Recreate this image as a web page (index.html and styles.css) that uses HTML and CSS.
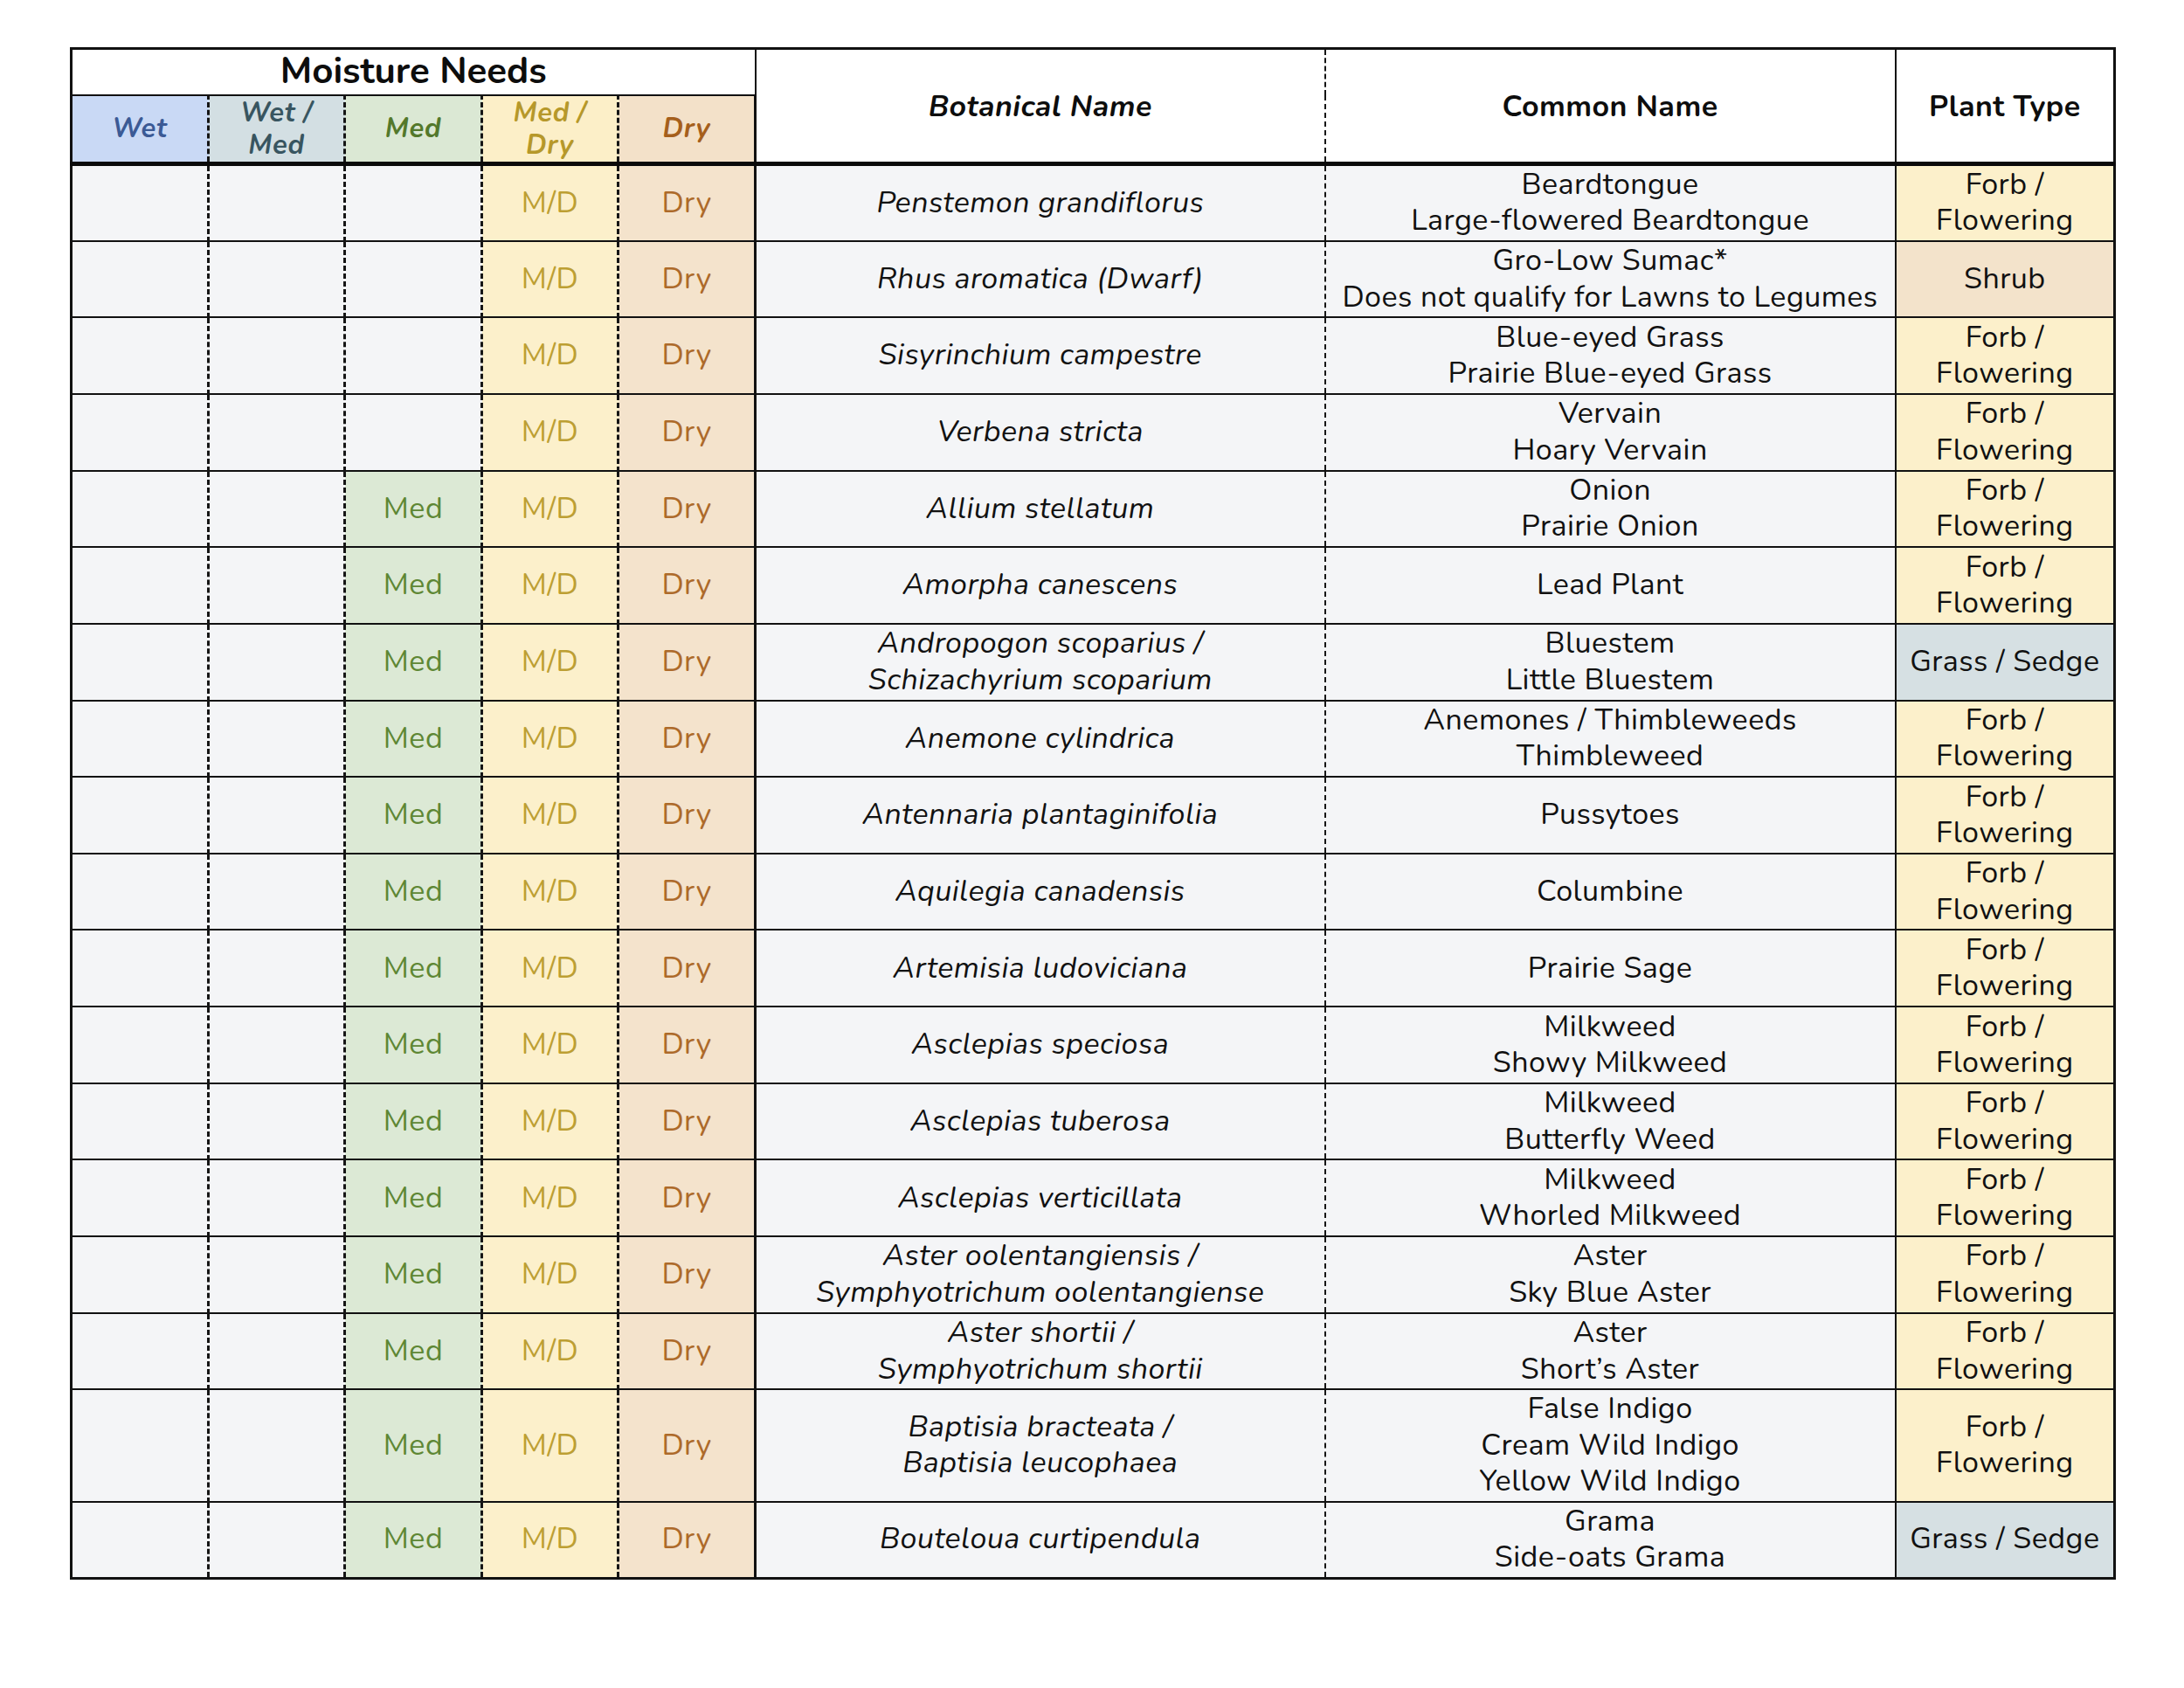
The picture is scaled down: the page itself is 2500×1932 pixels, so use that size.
FILE: index.html
```html
<!DOCTYPE html>
<html lang="en">
<head>
<meta charset="utf-8">
<title>Plant List – Moisture Needs</title>
<link rel="stylesheet" href="styles.css">
</head>
<body>
<main class="page">
<table class="plants">
  <colgroup>
    <col class="c-m"><col class="c-m2"><col class="c-m"><col class="c-m2"><col class="c-m">
    <col class="c-bot"><col class="c-com"><col class="c-type">
  </colgroup>
  <thead>
    <tr class="h1">
      <th colspan="5" class="mn">Moisture Needs</th>
      <th rowspan="2" class="hb bot-h">Botanical Name</th>
      <th rowspan="2" class="hb com-h">Common Name</th>
      <th rowspan="2" class="hb type-h">Plant Type</th>
    </tr>
    <tr class="h2">
      <th class="sh wet">Wet</th>
      <th class="sh wetmed">Wet /<br>Med</th>
      <th class="sh med">Med</th>
      <th class="sh meddry">Med /<br>Dry</th>
      <th class="sh dry last-m">Dry</th>
    </tr>
  </thead>
  <tbody>
    <tr><td class="m"></td><td class="m"></td><td class="m"></td><td class="m md">M/D</td><td class="m dr">Dry</td><td class="bot">Penstemon grandiflorus</td><td class="com">Beardtongue<br>Large-flowered Beardtongue</td><td class="type forb">Forb /<br>Flowering</td></tr>
    <tr><td class="m"></td><td class="m"></td><td class="m"></td><td class="m md">M/D</td><td class="m dr">Dry</td><td class="bot">Rhus aromatica (Dwarf)</td><td class="com">Gro-Low Sumac*<br>Does not qualify for Lawns to Legumes</td><td class="type shrub">Shrub</td></tr>
    <tr><td class="m"></td><td class="m"></td><td class="m"></td><td class="m md">M/D</td><td class="m dr">Dry</td><td class="bot">Sisyrinchium campestre</td><td class="com">Blue-eyed Grass<br>Prairie Blue-eyed Grass</td><td class="type forb">Forb /<br>Flowering</td></tr>
    <tr><td class="m"></td><td class="m"></td><td class="m"></td><td class="m md">M/D</td><td class="m dr">Dry</td><td class="bot">Verbena stricta</td><td class="com">Vervain<br>Hoary Vervain</td><td class="type forb">Forb /<br>Flowering</td></tr>
    <tr><td class="m"></td><td class="m"></td><td class="m me">Med</td><td class="m md">M/D</td><td class="m dr">Dry</td><td class="bot">Allium stellatum</td><td class="com">Onion<br>Prairie Onion</td><td class="type forb">Forb /<br>Flowering</td></tr>
    <tr><td class="m"></td><td class="m"></td><td class="m me">Med</td><td class="m md">M/D</td><td class="m dr">Dry</td><td class="bot">Amorpha canescens</td><td class="com">Lead Plant</td><td class="type forb">Forb /<br>Flowering</td></tr>
    <tr><td class="m"></td><td class="m"></td><td class="m me">Med</td><td class="m md">M/D</td><td class="m dr">Dry</td><td class="bot">Andropogon scoparius /<br>Schizachyrium scoparium</td><td class="com">Bluestem<br>Little Bluestem</td><td class="type grass">Grass / Sedge</td></tr>
    <tr><td class="m"></td><td class="m"></td><td class="m me">Med</td><td class="m md">M/D</td><td class="m dr">Dry</td><td class="bot">Anemone cylindrica</td><td class="com">Anemones / Thimbleweeds<br>Thimbleweed</td><td class="type forb">Forb /<br>Flowering</td></tr>
    <tr><td class="m"></td><td class="m"></td><td class="m me">Med</td><td class="m md">M/D</td><td class="m dr">Dry</td><td class="bot">Antennaria plantaginifolia</td><td class="com">Pussytoes</td><td class="type forb">Forb /<br>Flowering</td></tr>
    <tr><td class="m"></td><td class="m"></td><td class="m me">Med</td><td class="m md">M/D</td><td class="m dr">Dry</td><td class="bot">Aquilegia canadensis</td><td class="com">Columbine</td><td class="type forb">Forb /<br>Flowering</td></tr>
    <tr><td class="m"></td><td class="m"></td><td class="m me">Med</td><td class="m md">M/D</td><td class="m dr">Dry</td><td class="bot">Artemisia ludoviciana</td><td class="com">Prairie Sage</td><td class="type forb">Forb /<br>Flowering</td></tr>
    <tr><td class="m"></td><td class="m"></td><td class="m me">Med</td><td class="m md">M/D</td><td class="m dr">Dry</td><td class="bot">Asclepias speciosa</td><td class="com">Milkweed<br>Showy Milkweed</td><td class="type forb">Forb /<br>Flowering</td></tr>
    <tr><td class="m"></td><td class="m"></td><td class="m me">Med</td><td class="m md">M/D</td><td class="m dr">Dry</td><td class="bot">Asclepias tuberosa</td><td class="com">Milkweed<br>Butterfly Weed</td><td class="type forb">Forb /<br>Flowering</td></tr>
    <tr><td class="m"></td><td class="m"></td><td class="m me">Med</td><td class="m md">M/D</td><td class="m dr">Dry</td><td class="bot">Asclepias verticillata</td><td class="com">Milkweed<br>Whorled Milkweed</td><td class="type forb">Forb /<br>Flowering</td></tr>
    <tr><td class="m"></td><td class="m"></td><td class="m me">Med</td><td class="m md">M/D</td><td class="m dr">Dry</td><td class="bot">Aster oolentangiensis /<br>Symphyotrichum oolentangiense</td><td class="com">Aster<br>Sky Blue Aster</td><td class="type forb">Forb /<br>Flowering</td></tr>
    <tr><td class="m"></td><td class="m"></td><td class="m me">Med</td><td class="m md">M/D</td><td class="m dr">Dry</td><td class="bot">Aster shortii /<br>Symphyotrichum shortii</td><td class="com">Aster<br>Short’s Aster</td><td class="type forb">Forb /<br>Flowering</td></tr>
    <tr><td class="m"></td><td class="m"></td><td class="m me">Med</td><td class="m md">M/D</td><td class="m dr">Dry</td><td class="bot">Baptisia bracteata /<br>Baptisia leucophaea</td><td class="com">False Indigo<br>Cream Wild Indigo<br>Yellow Wild Indigo</td><td class="type forb">Forb /<br>Flowering</td></tr>
    <tr><td class="m"></td><td class="m"></td><td class="m me">Med</td><td class="m md">M/D</td><td class="m dr">Dry</td><td class="bot">Bouteloua curtipendula</td><td class="com">Grama<br>Side-oats Grama</td><td class="type grass">Grass / Sedge</td></tr>
  </tbody>
</table>
</main>
</body>
</html>
```
FILE: styles.css
```css
html, body {
  margin: 0;
  padding: 0;
  background: #ffffff;
}

body {
  font-family: "Nunito", "Lato", "Noto Sans", sans-serif;
  color: #111111;
}

.page {
  padding: 54px 0 0 80px;
}

.plants {
  border-collapse: collapse;
  table-layout: fixed;
  width: 2339px;
  border: 3px solid #111111;
}

.c-m { width: 157px; }
.c-m2 { width: 156px; }
.c-bot { width: 652px; }
.c-com { width: 653px; }
.c-type { width: 251px; }

th, td {
  padding: 0 4px;
  text-align: center;
  vertical-align: middle;
  font-size: 34px;
  line-height: 41.4px;
  letter-spacing: 0.45px;
}

/* header rows */
.h1 { height: 53px; }
.h2 { height: 77px; }

th {
  background: #ffffff;
  font-weight: 700;
  color: #0d0d0d;
}

.mn {
  font-size: 42px;
  line-height: 50px;
  letter-spacing: 0;
  border-bottom: 2px solid #111111;
  border-right: 2px solid #111111;
}

.hb {
  border-bottom: 5px solid #0a0a0a;
  padding-top: 4px;
}
.bot-h {
  font-style: italic;
  border-right: 2px dashed #151515;
}
.com-h {
  border-right: 2px solid #111111;
}

.sh {
  font-style: italic;
  font-size: 31px;
  line-height: 37.2px;
  letter-spacing: 0.7px;
  padding-top: 1px;
  border-bottom: 5px solid #0a0a0a;
  border-right: 3px dashed #151515;
}
.sh.last-m { border-right: 3px solid #111111; }

.sh.wet { background: #c9d9f5; color: #3b5a95; }
.sh.wetmed { background: #d3dfe3; color: #385560; }
.sh.med { background: #dbe8d4; color: #53782b; }
.sh.meddry { background: #fcefc8; color: #b6982a; }
.sh.dry { background: #f3e1c9; color: #a55f1c; }

/* body rows */
tbody tr { height: 87.65px; }

tbody td {
  background: #f4f5f7;
  border-bottom: 2px solid #111111;
  padding: 1px 4px;
}

td.m {
  border-right: 3px dashed #151515;
}
td.dr { border-right: 3px solid #111111; }

td.me { background: #dce9d5; color: #5e8734; }
td.md { background: #fcf0cb; color: #bd9f33; }
td.dr { background: #f4e3cc; color: #ad6a2a; }

td.bot {
  font-style: italic;
  border-right: 2px dashed #151515;
}
td.com {
  border-right: 2px solid #111111;
}

td.type.forb { background: #fcf0cb; }
td.type.shrub { background: #f3e3cb; }
td.type.grass { background: #d6e0e3; }
```
